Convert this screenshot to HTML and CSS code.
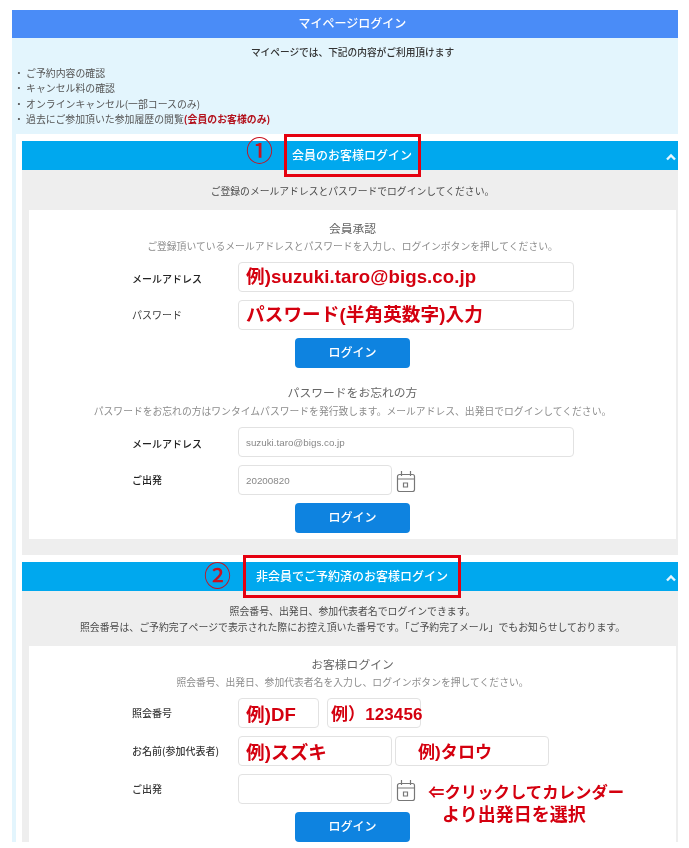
FILE: index.html
```html
<!DOCTYPE html>
<html lang="ja">
<head>
<meta charset="utf-8">
<title>マイページログイン</title>
<link rel="stylesheet" href="styles.css">
</head>
<body>
<svg class="defs" width="0" height="0" aria-hidden="true">
  <symbol id="cal" viewBox="0 0 20 23">
    <path d="M1.5 7.5a2 2 0 0 1 2-2h13a2 2 0 0 1 2 2v13a2 2 0 0 1-2 2h-13a2 2 0 0 1-2-2zM1.5 10h17M5.5 2v5M14.5 2v5M7.5 14h4v4h-4z" fill="none" stroke="#777" stroke-width="1.2"/>
  </symbol>
  <symbol id="chev" viewBox="0 0 10 8">
    <path d="M1 6.5 5 2.5l4 4" fill="none" stroke="#e8f7fe" stroke-width="2.4"/>
  </symbol>
</svg>
<main class="page">
  <h1 class="page-title">マイページログイン</h1>
  <section class="intro">
    <p class="intro-lead">マイページでは、下記の内容がご利用頂けます</p>
    <ul class="intro-list">
      <li>ご予約内容の確認</li>
      <li>キャンセル料の確認</li>
      <li>オンラインキャンセル(一部コースのみ)</li>
      <li>過去にご参加頂いた参加履歴の閲覧<strong>(会員のお客様のみ)</strong></li>
    </ul>
  </section>
  <div class="panels">
    <section class="panel panel-member">
      <header class="panel-head">
        <h2>会員のお客様ログイン</h2>
        <svg class="chev"><use href="#chev"/></svg>
        <span class="mark mark-one">①</span>
        <span class="redbox redbox-one"></span>
      </header>
      <div class="panel-body">
        <p class="panel-note panel-note-one">ご登録のメールアドレスとパスワードでログインしてください。</p>
        <div class="card card-member">
          <h3 class="card-title">会員承認</h3>
          <p class="card-sub">ご登録頂いているメールアドレスとパスワードを入力し、ログインボタンを押してください。</p>
          <div class="form-row">
            <span class="label label-strong label-mail">メールアドレス</span>
            <div class="field field-full"><span class="hint">例)suzuki.taro@bigs.co.jp</span></div>
          </div>
          <div class="form-row">
            <span class="label">パスワード</span>
            <div class="field field-full"><span class="hint">パスワード(半角英数字)入力</span></div>
          </div>
          <button class="login" type="button">ログイン</button>
          <h3 class="card-title card-title-forgot">パスワードをお忘れの方</h3>
          <p class="card-sub card-sub-forgot">パスワードをお忘れの方はワンタイムパスワードを発行致します。メールアドレス、出発日でログインしてください。</p>
          <div class="form-row">
            <span class="label label-strong label-mail">メールアドレス</span>
            <div class="field field-full field-sample">suzuki.taro@bigs.co.jp</div>
          </div>
          <div class="form-row">
            <span class="label label-strong">ご出発</span>
            <div class="field field-half field-sample">20200820</div>
            <svg class="cal"><use href="#cal"/></svg>
          </div>
          <button class="login" type="button">ログイン</button>
        </div>
      </div>
    </section>
    <section class="panel panel-guest">
      <header class="panel-head">
        <h2>非会員でご予約済のお客様ログイン</h2>
        <svg class="chev"><use href="#chev"/></svg>
        <span class="mark mark-two">②</span>
        <span class="redbox redbox-two"></span>
      </header>
      <div class="panel-body">
        <p class="panel-note panel-note-two">照会番号、出発日、参加代表者名でログインできます。<br>照会番号は、ご予約完了ページで表示された際にお控え頂いた番号です。「ご予約完了メール」でもお知らせしております。</p>
        <div class="card">
          <h3 class="card-title">お客様ログイン</h3>
          <p class="card-sub">照会番号、出発日、参加代表者名を入力し、ログインボタンを押してください。</p>
          <div class="form-row form-row-guest">
            <span class="label label-small">照会番号</span>
            <div class="field field-code"><span class="hint">例)DF</span></div>
            <div class="field field-num"><span class="hint hint-tight">例）123456</span></div>
          </div>
          <div class="form-row form-row-guest">
            <span class="label label-small">お名前(参加代表者)</span>
            <div class="field field-half"><span class="hint">例)スズキ</span></div>
            <div class="field field-half field-given"><span class="hint hint-given">例)タロウ</span></div>
          </div>
          <div class="form-row form-row-date">
            <span class="label label-small">ご出発</span>
            <div class="field field-half"></div>
            <svg class="cal"><use href="#cal"/></svg>
            <p class="cal-note">⇐クリックしてカレンダー<br><span>より出発日を選択</span></p>
          </div>
          <button class="login" type="button">ログイン</button>
        </div>
      </div>
    </section>
  </div>
</main>
</body>
</html>
```
FILE: styles.css
```css
* { box-sizing: border-box; }
html, body { margin: 0; background: #fff; }
body {
  height: 848px;
  overflow: hidden;
  padding-top: 10px;
  font-family: "Noto Sans CJK JP", "Liberation Sans", sans-serif;
  color: #333;
  filter: blur(0.4px);
}
.defs { position: absolute; }
.page {
  margin: 0 11px 0 12px;
  height: 832px;
  overflow: hidden;
  background: #e3f5fd;
}
h1, h2, h3, p, ul { margin: 0; padding: 0; font-weight: 400; }
.page-title {
  height: 28px;
  padding-left: 15px;
  background: #4a8cf7;
  color: #fff;
  text-align: center;
  font-size: 12px;
  font-weight: 500;
  line-height: 26px;
}
.intro { height: 96px; padding-top: 6px; font-size: 10px; }
.intro-lead { text-align: center; font-size: 9.7px; line-height: 16px; font-weight: 500; color: #333; margin-bottom: 6px; padding-left: 15px; }
.intro-list { list-style: none; font-size: 9.9px; line-height: 15.4px; color: #555; }
.intro-list li { padding-left: 14px; position: relative; }
.intro-list li::before { content: "・"; position: absolute; left: 2px; }
.intro-list strong { color: #b3121d; font-weight: 700; }
.panels { margin-left: 4px; height: 708px; background: #fff; padding: 7px 0 0 6px; }
.panel-head {
  position: relative;
  height: 29px;
  background: #00a8ee;
  color: #fff;
  text-align: center;
}
.panel-head h2 { font-size: 12px; font-weight: 500; line-height: 28px; padding-left: 4px; }
.chev { position: absolute; right: 2px; top: 12px; width: 10px; height: 8px; }
.mark { position: absolute; color: #c8121f; font-size: 27px; font-weight: 500; line-height: 30px; font-family: "Noto Sans CJK JP", "Liberation Sans", sans-serif; }
.mark-one { left: 224px; top: -6px; }
.mark-two { left: 182px; top: -2px; }
.redbox { position: absolute; border: 3px solid #e5000f; }
.redbox-one { left: 262px; top: -7px; width: 137px; height: 43px; }
.redbox-two { left: 221px; top: -7px; width: 218px; height: 43px; }
.panel-body { background: #eee; padding: 0 2px 16px 7px; }
.panel-member { margin-bottom: 7px; }
.panel-note { text-align: center; font-size: 9.9px; color: #4a4a4a; }
.panel-note-one { height: 40px; line-height: 42px; font-size: 9.8px; }
.panel-note-two { height: 55px; padding-top: 12px; line-height: 16px; }
.card { background: #fff; padding-top: 10px; }
.card-member { height: 329px; }
.card-title { text-align: center; font-size: 11.8px; line-height: 16px; color: #666; }
.card-sub { text-align: center; font-size: 9.8px; line-height: 16px; color: #8c8c8c; margin-top: 2px; margin-bottom: 8px; }
.card-title-forgot { margin-top: 16px; }
.card-sub-forgot { margin-top: 3px; margin-bottom: 8px; }
.form-row {
  display: flex;
  align-items: center;
  gap: 4px;
  padding-left: 209px;
  position: relative;
  height: 30px;
  margin-bottom: 8px;
}
.label { position: absolute; left: 103px; top: 0; line-height: 30px; font-size: 10px; color: #3a3a3a; }
.label-strong { font-weight: 500; color: #222; }
.label-mail { top: 2px; }
.label-small { font-size: 10px; font-weight: 500; }
.field {
  height: 30px;
  background: #fff;
  border: 1px solid #e2e2e2;
  border-radius: 4px;
  display: flex;
  align-items: center;
  padding-left: 7px;
  flex: none;
  white-space: nowrap;
}
.field-full { width: 336px; }
.field-half { width: 154px; }
.field-code { width: 81px; }
.field-num { width: 94px; margin-left: 4px; padding-left: 3px; }
.field-given { margin-left: -1px; padding-left: 22px; }
.field-sample { font-size: 9.8px; color: #888; font-family: "Liberation Sans", "Noto Sans CJK JP", sans-serif; }
.form-row-guest .field { padding-top: 3px; }
.hint {
  color: #d4000f;
  font-family: "Liberation Sans", "Noto Sans CJK JP", sans-serif;
  font-weight: 700;
  font-size: 18.6px;
  letter-spacing: 0.1px;
  line-height: 24px;
  white-space: nowrap;
}
.hint-tight { font-size: 17px; }
.hint-given { font-size: 17px; }
.cal { width: 20px; height: 23px; flex: none; }
.cal-note {
  position: absolute;
  left: 399px;
  top: 7px;
  color: #d4000f;
  font-family: "Liberation Sans", "Noto Sans CJK JP", sans-serif;
  font-weight: 700;
  font-size: 16.4px;
  line-height: 23px;
  white-space: nowrap;
}
.cal-note span { padding-left: 14px; font-size: 18px; }
.login {
  display: block;
  width: 115px;
  height: 30px;
  margin: 0 auto;
  padding: 0 0 3px;
  border: 0;
  border-radius: 4px;
  background: #0e83e0;
  color: #fff;
  font: 500 12px "Noto Sans CJK JP", sans-serif;
}
```
